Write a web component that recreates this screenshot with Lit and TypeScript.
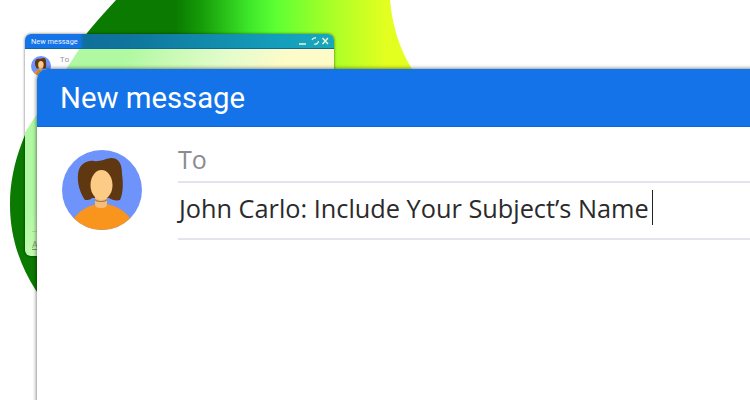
import { LitElement, css, html, svg } from 'lit'
import { customElement } from 'lit/decorators.js'

const avatar = (id: string) => html`
  <svg class="avatar-svg" viewBox="0 0 80 80" aria-hidden="true">
    <defs>
      <clipPath id=${id}><circle cx="40" cy="40" r="40"></circle></clipPath>
    </defs>
    <g clip-path="url(#${id})">
      <rect width="80" height="80" fill="#6e93fb"></rect>
      <path d="M16 24C17 15 24 10 32 11C38 12 42 9 49 8C57 8 60 14 60 24C61.500 34 61 44 58 50C54 51 50 50 47 48L30 48C28 50 26 50 23 50C18 43 15 33 16 24Z" fill="#5f3710"></path>
      <path d="M12 68C20 58 30 54 40 54C50 54 60 58 68 68L68 80L12 80Z" fill="#f9951c"></path>
      <path d="M33 44H45V54C45 57 43 58 39 58C35 58 33 57 33 54Z" fill="#f4bd7a"></path>
      <path d="M33 49C36 51.500 42 51.500 45 49V50.500C42 52.500 36 52.500 33 50.500Z" fill="#a97c48"></path>
      <ellipse cx="39.500" cy="35" rx="11" ry="15" fill="#fccb85"></ellipse>
    </g>
  </svg>
`

const blob = svg`
  <defs>
    <linearGradient id="blob-fill" gradientUnits="userSpaceOnUse" x1="175" y1="0" x2="385" y2="0">
      <stop offset="0" stop-color="#0a7a00"></stop>
      <stop offset="0.12" stop-color="#159a08"></stop>
      <stop offset="0.357" stop-color="#3ee82a"></stop>
      <stop offset="0.476" stop-color="#5cff33"></stop>
      <stop offset="0.74" stop-color="#a8ff28"></stop>
      <stop offset="1" stop-color="#e2ff20"></stop>
    </linearGradient>
  </defs>
  <path d="M116 0L390 0C392 22 398 48 414 72L414 320L60 320C30 290 10 250 10 205C10 160 28 125 50 85C70 52 92 26 116 0Z" fill="url(#blob-fill)"></path>
`

@customElement('app-root')
export class AppRoot extends LitElement {
  render() {
    return html`
      <svg class="blob" viewBox="0 0 750 400" aria-hidden="true">${blob}</svg>

      <section class="mini">
        <header class="mini-title">
          <span>New message</span>
          <span class="mini-controls">
            <svg viewBox="0 0 34 10" width="34" height="10" aria-hidden="true">
              <path d="M1 8H8" stroke="#e8f6d8" stroke-width="1.600" fill="none"></path>
              <path d="M14 4A3.400 3.400 0 0 1 18 2M20.500 5A3.400 3.400 0 0 1 16 8" stroke="#e8f6d8" stroke-width="1.300" fill="none"></path>
              <path d="M24.500 2L30 8M30 2L24.500 8" stroke="#e8f6d8" stroke-width="1.500" fill="none"></path>
            </svg>
          </span>
        </header>
        <div class="mini-body">
          <div class="mini-avatar">${avatar('mini-clip')}</div>
          <div class="mini-to">To</div>
          <div class="mini-foot">A</div>
        </div>
      </section>

      <section class="main">
        <header class="main-title">New message</header>
        <div class="main-body">
          <div class="main-avatar">${avatar('main-clip')}</div>
          <div class="fields">
            <div class="field to">To</div>
            <div class="field subject">John Carlo: Include Your Subject’s Name<i class="caret"></i></div>
          </div>
        </div>
      </section>
    `
  }

  static styles = css`
    :host {
      display: block;
      position: relative;
      width: 750px;
      height: 400px;
      overflow: hidden;
      background: #fff;
    }

    .blob {
      position: absolute;
      left: 0;
      top: 0;
      width: 750px;
      height: 400px;
    }

    .avatar-svg {
      display: block;
      width: 100%;
      height: 100%;
    }

    .mini {
      position: absolute;
      left: 25px;
      top: 34px;
      width: 309px;
      height: 222px;
      display: flex;
      flex-direction: column;
      border-radius: 6px;
      overflow: hidden;
      box-shadow: 0 0 3px rgba(0, 0, 0, 0.6);
    }

    .mini-title {
      height: 14px;
      flex: none;
      display: flex;
      align-items: center;
      justify-content: space-between;
      padding: 0 2px 0 6px;
      font: 7.400px Roboto, sans-serif;
      color: #eaf4ff;
      background: linear-gradient(90deg, #1473e6 0, #1473e6 55px, #0f6f9c 59px, #0f769c 110px, #14a0bc 260px, #1aa7bb 100%);
      border-bottom: 1px solid #0d6a94;
    }

    .mini-controls {
      display: flex;
    }

    .mini-body {
      position: relative;
      flex: 1;
      background: linear-gradient(123deg, #fff 0, #fff 45px, #b0f9a2 46px, #b0f9a2 90px, #c8fab4 125px, #e4fccc 175px, #fdfbc8 225px, #fdfbc6 100%);
    }

    .mini-avatar {
      position: absolute;
      left: 6px;
      top: 7px;
      width: 20px;
      height: 20px;
    }

    .mini-to {
      position: absolute;
      left: 35px;
      top: 4px;
      font: 8px 'Open Sans', sans-serif;
      color: #8d8d94;
    }

    .mini-foot {
      position: absolute;
      left: 7px;
      right: 0;
      top: 182px;
      padding-top: 6px;
      font: 9px 'Open Sans', sans-serif;
      text-decoration: underline;
      color: #6f9a68;
      border-top: 1px solid rgba(120, 150, 110, 0.3);
    }

    .main {
      position: absolute;
      left: 37px;
      top: 69px;
      width: 760px;
      height: 360px;
      display: flex;
      flex-direction: column;
      border-radius: 10px 0 0 0;
      background: #fff;
      box-shadow: 0 0 4px rgba(0, 0, 0, 0.65);
    }

    .main-title {
      height: 56px;
      flex: none;
      display: flex;
      align-items: center;
      padding: 1px 0 0 23px;
      border-radius: 10px 0 0 0;
      font: 29.300px Roboto, sans-serif;
      color: #fff;
      background: #1473e9;
      border-bottom: 1px solid #0f66d6;
    }

    .main-body {
      display: flex;
      align-items: flex-start;
      padding: 23px 0 0 25px;
      gap: 36px;
    }

    .main-avatar {
      flex: none;
      width: 80px;
      height: 80px;
    }

    .fields {
      flex: 1;
      margin-top: -23px;
    }

    .field {
      font-family: 'Open Sans', sans-serif;
      border-bottom: 2px solid #e4e4f0;
      display: flex;
      align-items: center;
      box-sizing: border-box;
    }

    .to {
      height: 56px;
      padding-top: 10px;
      font-size: 25px;
      color: #8b8b92;
    }

    .subject {
      height: 57px;
      padding: 0 0 6px 1px;
      font-size: 25.300px;
      color: #2a2a2c;
      white-space: nowrap;
    }

    .caret {
      display: inline-block;
      width: 1px;
      height: 35px;
      margin-left: 3px;
      background: #222;
    }
  `
}

declare global {
  interface HTMLElementTagNameMap {
    'app-root': AppRoot
  }
}
